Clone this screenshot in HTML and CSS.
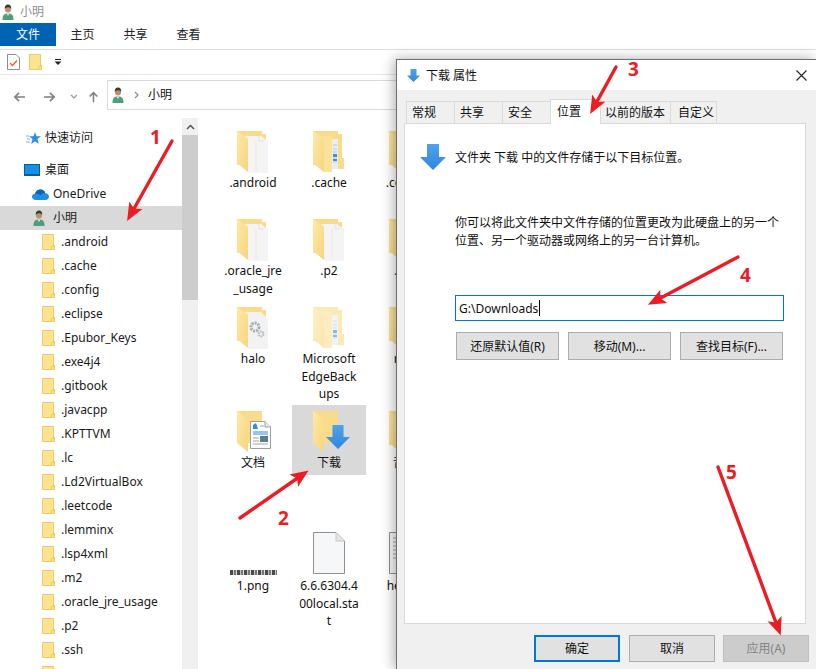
FILE: index.html
```html
<!DOCTYPE html>
<html lang="zh">
<head>
<meta charset="utf-8">
<title>小明</title>
<link rel="stylesheet" href="styles.css">
</head>
<body>
<svg class="defs" aria-hidden="true">
  <defs>
    <linearGradient id="leaf" x1="0" y1="0" x2="1" y2="1"><stop offset="0" stop-color="#fde9a8"/><stop offset="1" stop-color="#f7d57c"/></linearGradient>
    <linearGradient id="blue" x1="0" y1="0" x2="0" y2="1"><stop offset="0" stop-color="#4ea3ea"/><stop offset="1" stop-color="#2f86dc"/></linearGradient>
    <symbol id="user" viewBox="0 0 12 16">
      <path d="M0.5 16C0.5 11 2 9.5 6 9.5S11.5 11 11.5 16Z" fill="#4f9e7b"/>
      <path d="M4.5 9.5L6 12L7.5 9.5Z" fill="#e6e6e0"/>
      <circle cx="6" cy="5.4" r="3" fill="#b88f70"/>
      <path d="M2.8 5C2.4 1.8 4.4 0.5 6.2 0.5S9.6 2 9.2 5C8.4 3.6 7 3.2 5 3.4 4 3.6 3.2 4 2.8 5Z" fill="#3b3a32"/>
    </symbol>
    <symbol id="mini" viewBox="0 0 13 16">
      <path d="M0.5 0.5H11.5V11H12.5V15.5H0.5Z" fill="#fde290" stroke="#eccb68"/>
      <path d="M9.5 12.5V15.5M9.5 12.5H11.5V11" fill="none" stroke="#eccb68"/>
    </symbol>
    <symbol id="fld-paper" viewBox="0 0 32 43">
      <path d="M0 0H25V3H29V34H0Z" fill="#f9dc8a"/>
      <path d="M8 5H24L29 9H31V42H11Z" fill="#f4f4f4"/>
      <path d="M22 5V10H27" fill="none" stroke="#d9d9d9" stroke-width=".6"/>
      <path d="M19 10V40" stroke="#ebe3cf" stroke-width=".8"/>
      <path d="M0 0L11 8V41L0 32Z" fill="url(#leaf)"/>
    </symbol>
    <symbol id="fld-strip" viewBox="0 0 32 43">
      <path d="M0 0H25V3H29V27H31V38H14V34H0Z" fill="#f9dc8a"/>
      <path d="M19 8H25V38H19Z" fill="#e9eef2"/>
      <path d="M20 14H24M20 18H24M20 21H24M20 27H24M20 31H24" stroke="#b9c8d4"/>
      <path d="M20 23H24V26H20ZM20 28H24V30H20Z" fill="#3d8fd1"/>
      <path d="M0 0L10 5H19V41L11 41L0 32Z" fill="#fbe29a"/>
      <path d="M0 0L11 8V41L0 32Z" fill="url(#leaf)"/>
    </symbol>
    <symbol id="fld-gear" viewBox="0 0 32 43">
      <path d="M0 0H25V3H29V34H0Z" fill="#f9dc8a"/>
      <path d="M8 5H24L31 12V42H11Z" fill="#f2f2f2"/>
      <circle cx="18" cy="20" r="4" fill="none" stroke="#a7adb3" stroke-width="3" stroke-dasharray="2 1"/>
      <circle cx="24" cy="27" r="2.4" fill="none" stroke="#b5bbc0" stroke-width="2.2" stroke-dasharray="1.5 .8"/>
      <path d="M0 0L11 8V41L0 32Z" fill="url(#leaf)"/>
    </symbol>
    <symbol id="fld-plain" viewBox="0 0 32 43">
      <path d="M0 0H25V32H0Z" fill="#f9dc8a"/>
      <path d="M0 0L11 8V41L0 32Z" fill="url(#leaf)"/>
    </symbol>
    <symbol id="arrow-down" viewBox="0 0 26 26">
      <path d="M7 0H19V13H26L13 26L0 13H7Z" fill="url(#blue)"/>
    </symbol>
    <marker id="head" markerUnits="userSpaceOnUse" markerWidth="20" markerHeight="18" refX="10" refY="9" orient="auto">
      <path d="M0 1.5L18 9L0 16.500L4 9Z" fill="#ec1c24"/>
    </marker>
  </defs>
</svg>

<div class="explorer">
  <div class="titlebar">
    <svg class="ico-user"><use href="#user"/></svg>
    <span>小明</span>
  </div>
  <div class="ribbon">
    <div class="rib-tab rib-file">文件</div>
    <div class="rib-tab">主页</div>
    <div class="rib-tab">共享</div>
    <div class="rib-tab">查看</div>
  </div>
  <div class="quick">
    <svg class="q-doc" viewBox="0 0 13 16"><path d="M.5.5H9L12.500 4V15.500H.5Z" fill="#fff" stroke="#8d8d8d"/><path d="M3 9L5.500 11.500L10 6.500" fill="none" stroke="#e8622a" stroke-width="1.300"/></svg>
    <svg class="q-fld"><use href="#mini"/></svg>
    <svg class="q-drop" viewBox="0 0 8 6"><path d="M1 .5H7" stroke="#222"/><path d="M.5 2.500H7.500L4 6Z" fill="#222"/></svg>
  </div>
  <div class="navbar">
    <svg class="nav-ico nav-back" viewBox="0 0 14 12"><path d="M13 6H2M6.500 1.500L2 6L6.500 10.500" fill="none" stroke="#808080" stroke-width="1.800"/></svg>
    <svg class="nav-ico nav-fwd" viewBox="0 0 14 12"><path d="M1 6H12M7.500 1.500L12 6L7.500 10.500" fill="none" stroke="#808080" stroke-width="1.800"/></svg>
    <svg class="nav-chev" viewBox="0 0 8 5"><path d="M1 1L4 4L7 1" fill="none" stroke="#9a9a9a" stroke-width="1.200"/></svg>
    <svg class="nav-ico nav-up" viewBox="0 0 12 14"><path d="M6 13V2M1.500 6.500L6 2L10.500 6.500" fill="none" stroke="#808080" stroke-width="1.800"/></svg>
    <div class="address">
      <svg class="ico-user"><use href="#user"/></svg>
      <svg class="addr-chev" viewBox="0 0 5 8"><path d="M1 1L4 4L1 7" fill="none" stroke="#8a8a8a" stroke-width="1.200"/></svg>
      <span>小明</span>
    </div>
  </div>

  <div class="main">
    <nav class="sidebar">
      <div class="row row-quick">
        <svg class="ico-star" viewBox="0 0 15 13"><path d="M9 0L10.500 4.200H15L11.400 7L12.800 12L9 9.200L5.200 12L6.500 7L3 4.200H7.500Z" fill="#2a8de6"/><path d="M0 4H3M1 7H4M0 10H4" stroke="#6db5ef"/></svg>
        <span>快速访问</span>
      </div>
      <div class="row row-desk">
        <svg class="ico-desk" viewBox="0 0 16 12"><rect x=".5" y=".5" width="15" height="11" fill="#1193ea" stroke="#17558a"/><path d="M1 10.500H15" stroke="#0b5da0"/></svg>
        <span>桌面</span>
      </div>
      <div class="row row-drive">
        <svg class="ico-cloud" viewBox="0 0 17 11"><path d="M4 11C1.500 11 0 9.600 0 7.800S1.500 4.800 3 4.800C3.800 2 6 .5 8.500.5S12.500 2 13.200 4C15.500 4.200 17 5.800 17 7.800S15.500 11 13.500 11Z" fill="#1f8fe0"/><path d="M3 4.800C3.800 2 6 .5 8.500.5S12.500 2 13.200 4C11 3.800 9.500 4.800 8.800 6.200C6.800 5 4.800 5 3 4.800Z" fill="#0e63b3"/></svg>
        <span>OneDrive</span>
      </div>
      <div class="row row-user row-on">
        <svg class="ico-user"><use href="#user"/></svg>
        <span>小明</span>
      </div>
      <div class="row row-sub"><svg class="ico-mini"><use href="#mini"/></svg><span>.android</span></div>
      <div class="row row-sub"><svg class="ico-mini"><use href="#mini"/></svg><span>.cache</span></div>
      <div class="row row-sub"><svg class="ico-mini"><use href="#mini"/></svg><span>.config</span></div>
      <div class="row row-sub"><svg class="ico-mini"><use href="#mini"/></svg><span>.eclipse</span></div>
      <div class="row row-sub"><svg class="ico-mini"><use href="#mini"/></svg><span>.Epubor_Keys</span></div>
      <div class="row row-sub"><svg class="ico-mini"><use href="#mini"/></svg><span>.exe4j4</span></div>
      <div class="row row-sub"><svg class="ico-mini"><use href="#mini"/></svg><span>.gitbook</span></div>
      <div class="row row-sub"><svg class="ico-mini"><use href="#mini"/></svg><span>.javacpp</span></div>
      <div class="row row-sub"><svg class="ico-mini"><use href="#mini"/></svg><span>.KPTTVM</span></div>
      <div class="row row-sub"><svg class="ico-mini"><use href="#mini"/></svg><span>.lc</span></div>
      <div class="row row-sub"><svg class="ico-mini"><use href="#mini"/></svg><span>.Ld2VirtualBox</span></div>
      <div class="row row-sub"><svg class="ico-mini"><use href="#mini"/></svg><span>.leetcode</span></div>
      <div class="row row-sub"><svg class="ico-mini"><use href="#mini"/></svg><span>.lemminx</span></div>
      <div class="row row-sub"><svg class="ico-mini"><use href="#mini"/></svg><span>.lsp4xml</span></div>
      <div class="row row-sub"><svg class="ico-mini"><use href="#mini"/></svg><span>.m2</span></div>
      <div class="row row-sub"><svg class="ico-mini"><use href="#mini"/></svg><span>.oracle_jre_usage</span></div>
      <div class="row row-sub"><svg class="ico-mini"><use href="#mini"/></svg><span>.p2</span></div>
      <div class="row row-sub"><svg class="ico-mini"><use href="#mini"/></svg><span>.ssh</span></div>
      <div class="row row-sub"><svg class="ico-mini"><use href="#mini"/></svg></div>
    </nav>
    <div class="scrollbar">
      <div class="sb-btn"><svg class="sb-chev" viewBox="0 0 9 6"><path d="M1 5L4.500 1.500L8 5" fill="none" stroke="#555" stroke-width="1.500"/></svg></div>
      <div class="sb-thumb"></div>
    </div>
    <div class="files">
      <div class="tile"><svg class="big"><use href="#fld-paper"/></svg><div class="label">.android</div></div>
      <div class="tile"><svg class="big"><use href="#fld-strip"/></svg><div class="label">.cache</div></div>
      <div class="tile"><svg class="big"><use href="#fld-paper"/></svg><div class="label">.config</div></div>

      <div class="tile"><svg class="big"><use href="#fld-paper"/></svg><div class="label">.oracle_jre<br>_usage</div></div>
      <div class="tile"><svg class="big"><use href="#fld-paper"/></svg><div class="label">.p2</div></div>
      <div class="tile"><svg class="big"><use href="#fld-paper"/></svg><div class="label">.ssh</div></div>

      <div class="tile"><svg class="big"><use href="#fld-gear"/></svg><div class="label">halo</div></div>
      <div class="tile"><svg class="big faded"><use href="#fld-strip"/></svg><div class="label">Microsoft<br>EdgeBack<br>ups</div></div>
      <div class="tile"><svg class="big"><use href="#fld-paper"/></svg><div class="label">rust</div></div>

      <div class="tile">
        <div class="big-wrap">
          <svg class="big"><use href="#fld-plain"/></svg>
          <svg class="overlay-doc" viewBox="0 0 21 28"><path d="M.5.500H15L20.500 6V27.500H.5Z" fill="#fff" stroke="#9aa0a6"/><path d="M15 .5V6H20.500" fill="#e9ecef" stroke="#9aa0a6"/><path d="M3 11H18M3 13H18" stroke="#2a8de6"/><path d="M3 4L6 2L8 8H3Z" fill="#2a8de6"/><path d="M10 5H14M3 17H9M3 20H9M3 23H18" stroke="#9aa0a6"/><rect x="10" y="15" width="8" height="6" fill="#5d7f8c"/></svg>
        </div>
        <div class="label">文档</div>
      </div>
      <div class="tile tile-on">
        <div class="big-wrap">
          <svg class="big"><use href="#fld-plain"/></svg>
          <svg class="overlay-arrow"><use href="#arrow-down"/></svg>
        </div>
        <div class="label">下载</div>
      </div>
      <div class="tile"><svg class="big"><use href="#fld-paper"/></svg><div class="label">音乐</div></div>

      <div class="tile tile-low">
        <div class="thumb-box"><div class="thumb"></div></div>
        <div class="label">1.png</div>
      </div>
      <div class="tile tile-low">
        <div class="thumb-box"><svg class="file-ico" viewBox="0 0 32 42"><path d="M.5.500H23L31.500 9V41.500H.5Z" fill="#f6f7f8" stroke="#8f8f8f"/><path d="M23 .5V9H31.500" fill="#e4e6e8" stroke="#c4c4c4"/></svg></div>
        <div class="label">6.6.6304.4<br>00local.sta<br>t</div>
      </div>
      <div class="tile tile-low">
        <div class="thumb-box"><svg class="file-ico" viewBox="0 0 32 42"><path d="M.5.500H23L31.500 9V41.500H.5Z" fill="#f6f7f8" stroke="#8f8f8f"/><path d="M4 6H20M4 10H20M4 14H28M4 18H28M4 22H28M4 26H28" stroke="#9a9a9a"/></svg></div>
        <div class="label">hello.c</div>
      </div>
    </div>
  </div>
</div>

<section class="dialog">
  <header class="dlg-title">
    <svg class="dlg-ico"><use href="#arrow-down"/></svg>
    <span>下载 属性</span>
    <svg class="dlg-close" viewBox="0 0 11 11"><path d="M.5.500L10.500 10.500M10.500.5L.5 10.500" stroke="#222" stroke-width="1.100"/></svg>
  </header>
  <div class="dlg-body">
    <div class="tabs">
      <div class="tab tab-a">常规</div>
      <div class="tab tab-a">共享</div>
      <div class="tab tab-a">安全</div>
      <div class="tab tab-a tab-on">位置</div>
      <div class="tab tab-b">以前的版本</div>
      <div class="tab tab-c">自定义</div>
    </div>
    <div class="panel">
      <div class="loc-head">
        <svg class="loc-ico"><use href="#arrow-down"/></svg>
        <span>文件夹 下载 中的文件存储于以下目标位置。</span>
      </div>
      <p class="loc-text">你可以将此文件夹中文件存储的位置更改为此硬盘上的另一个<br>位置、另一个驱动器或网络上的另一台计算机。</p>
      <div class="loc-input"><span>G:\Downloads</span><i class="caret"></i></div>
      <div class="loc-btns">
        <div class="btn btn-wide">还原默认值(R)</div>
        <div class="btn btn-wide">移动(M)...</div>
        <div class="btn btn-wide">查找目标(F)...</div>
      </div>
    </div>
    <div class="dlg-foot">
      <div class="btn btn-foot btn-default">确定</div>
      <div class="btn btn-foot">取消</div>
      <div class="btn btn-foot btn-off">应用(A)</div>
    </div>
  </div>
</section>

<div class="notes">
  <svg class="note-lines" viewBox="0 0 816 669">
    <line x1="172" y1="141" x2="131" y2="214" marker-end="url(#head)"/>
    <line x1="240" y1="518" x2="302" y2="475" marker-end="url(#head)"/>
    <line x1="616" y1="67" x2="594" y2="107" marker-end="url(#head)"/>
    <line x1="738" y1="257" x2="655" y2="301" marker-end="url(#head)"/>
    <line x1="718" y1="467" x2="778" y2="628" marker-end="url(#head)"/>
  </svg>
  <span class="num num-1">1</span>
  <span class="num num-2">2</span>
  <span class="num num-3">3</span>
  <span class="num num-4">4</span>
  <span class="num num-5">5</span>
</div>
</body>
</html>
```
FILE: styles.css
```css
html, body {
  margin: 0;
  height: 669px;
  overflow: hidden;
  background: #fff;
}
body {
  position: relative;
  font: 12px/17px "Noto Sans", "Noto Sans CJK SC", sans-serif;
  color: #111;
}
.defs { position: absolute; width: 0; height: 0; }

.explorer { width: 816px; height: 669px; overflow: hidden; display: flex; flex-direction: column; }

.titlebar { height: 23px; display: flex; align-items: center; gap: 6px; padding-left: 2px; color: #8e8e8e; }
.ico-user { width: 12px; height: 16px; flex: none; }

.ribbon { height: 26px; display: flex; box-sizing: content-box; align-items: flex-start; border-bottom: 1px solid #dcdcdc; }
.rib-tab { width: 53px; height: 23px; line-height: 24px; text-align: center; color: #222; }
.rib-file { width: 56px; background: #0063b1; color: #fff; }

.quick { height: 24px; display: flex; align-items: center; padding-left: 7px; border-bottom: 1px solid #e6e6e6; }
.q-doc { width: 13px; height: 16px; }
.q-fld { width: 13px; height: 16px; margin-left: 9px; }
.q-drop { width: 8px; height: 6px; margin-left: 12px; }

.navbar { height: 43px; display: flex; align-items: center; flex: none; padding-left: 13px; padding-bottom: 1px; box-sizing: border-box; }
.nav-ico { width: 13px; height: 12px; margin-top: 1px; }
.nav-fwd { margin-left: 17px; }
.nav-chev { width: 8px; height: 5px; margin-left: 14px; margin-top: 1px; }
.nav-up { margin-left: 9px; }
.address { margin-left: 7px; width: 340px; height: 30px; border: 1px solid #d9d9d9; display: flex; align-items: center; padding-left: 4px; box-sizing: border-box; flex: none; margin-top: -3px; }
.addr-chev { width: 5px; height: 8px; margin-left: 10px; margin-right: 9px; }

.main { flex: 1; display: flex; min-height: 0; }
.sidebar { width: 182px; padding-top: 8px; flex: none; color: #1a1a1a; }
.row { height: 24px; display: flex; align-items: center; box-sizing: border-box; }
.row span { white-space: nowrap; margin-bottom: 2px; }
.row-quick { padding-left: 26px; gap: 4px; margin-bottom: 8px; }
.row-desk { padding-left: 24px; gap: 5px; }
.row-drive { padding-left: 32px; gap: 4px; }
.row-user { padding-left: 33px; gap: 8px; }
.row-on { background: #d9d9d9; }
.row-sub { padding-left: 42px; gap: 6px; }
.ico-star { width: 15px; height: 13px; }
.ico-desk { width: 16px; height: 12px; }
.ico-cloud { width: 17px; height: 11px; }
.ico-mini { width: 13px; height: 16px; flex: none; }

.scrollbar { width: 16px; flex: none; background: #f0f0f0; }
.sb-btn { height: 17px; display: flex; align-items: center; justify-content: center; }
.sb-chev { width: 9px; height: 6px; }
.sb-thumb { height: 165px; background: #cdcdcd; }

.files {
  flex: 1;
  display: grid;
  grid-template-columns: repeat(3, 74px);
  grid-template-rows: 88px 88px 104px 120px auto;
  column-gap: 2px;
  padding: 7px 0 0 18px;
  align-content: start;
}
.tile { height: max-content; padding: 6px 0 3px; min-height: 61px; display: flex; flex-direction: column; align-items: center; box-sizing: border-box; }
.tile-on { background: #d9d9d9; height: 70px; }
.big { width: 32px; height: 43px; display: block; flex: none; }
.faded { opacity: .62; }
.big-wrap { width: 32px; height: 43px; position: relative; flex: none; }
.overlay-doc { position: absolute; left: 13px; top: 10px; width: 21px; height: 28px; }
.overlay-arrow { position: absolute; left: 13px; top: 14px; width: 24px; height: 24px; }
.label { text-align: center; line-height: 17.5px; white-space: nowrap; }
.thumb-box { height: 46px; width: 100%; display: flex; justify-content: center; align-items: flex-start; flex: none; }
.thumb { width: 47px; height: 5px; margin-top: 39px; filter: blur(.5px); background: repeating-linear-gradient(90deg, #4a4a4a 0 3px, #c4c4c4 3px 4px, #777 4px 6px, #dcdcdc 6px 7px); }
.file-ico { width: 32px; height: 42px; margin-top: 1px; }

.dialog {
  position: absolute;
  left: 396px;
  top: 59px;
  width: 420px;
  height: 610px;
  box-sizing: border-box;
  border: 1px solid #6e6e6e;
  border-right: 0;
  border-bottom: 0;
  background: #f0f0f0;
  box-shadow: -2px 0 12px rgba(0, 0, 0, .32);
  display: flex;
  flex-direction: column;
}
.dlg-title { height: 30px; flex: none; background: #fff; display: flex; align-items: center; padding-left: 10px; gap: 6px; }
.dlg-ico { width: 13px; height: 13px; }
.dlg-close { width: 11px; height: 11px; margin-left: auto; margin-right: 9px; }
.dlg-body { flex: 1; display: flex; flex-direction: column; padding: 9px 0 0 7px; }
.tabs { display: flex; height: 24px; align-items: flex-end; margin-left: 2px; flex: none; position: relative; z-index: 1; }
.tab { height: 22px; line-height: 21px; box-sizing: border-box; border: 1px solid #dadada; border-bottom: 0; margin-right: -1px; background: #f0f0f0; padding-left: 5px; }
.tab-a { width: 49px; }
.tab-b { width: 71px; padding-left: 4px; }
.tab-c { width: 47px; padding-left: 7px; }
.tab-on { background: #fff; height: 25px; margin-bottom: -1px; position: relative; z-index: 1; line-height: 23px; width: 51px; padding-left: 6px; }

.panel { width: 402px; height: 501px; flex: none; box-sizing: border-box; background: #fff; border: 1px solid #d9d9d9; padding: 19px 0 0 15px; }
.loc-head { display: flex; align-items: center; height: 27px; gap: 9px; }
.loc-head span { margin-top: 1px; }
.loc-ico { width: 26px; height: 26px; flex: none; }
.loc-text { margin: 44px 0 0 35px; line-height: 18px; white-space: nowrap; }
.loc-input { margin: 45px 0 0 35px; width: 329px; height: 26px; box-sizing: border-box; border: 1px solid #0078d7; display: flex; align-items: center; padding-left: 3px; }
.caret { width: 1px; height: 16px; background: #000; margin-left: 1px; }
.loc-btns { display: flex; gap: 9px; margin: 11px 0 0 36px; }

.btn { box-sizing: border-box; display: flex; align-items: center; justify-content: center; background: #e1e1e1; border: 1px solid #adadad; }
.btn-wide { width: 103px; height: 28px; }
.dlg-foot { display: flex; gap: 8px; margin: 11px 0 0 130px; }
.btn-foot { width: 86px; height: 27px; }
.btn-default { border: 2px solid #0078d7; margin-right: 1px; }
.btn-off { background: #ccc; border-color: #bfbfbf; color: #838383; }

.notes { position: absolute; inset: 0; z-index: 2; pointer-events: none; }
.note-lines { position: absolute; inset: 0; width: 816px; height: 669px; }
.note-lines line { stroke: #ec1c24; stroke-width: 3.4; stroke-linecap: round; }
.num { position: absolute; font: 700 19px/20px "Open Sans", sans-serif; color: #ec1c24; }
.num-1 { left: 150px; top: 127px; }
.num-2 { left: 278px; top: 508px; }
.num-3 { left: 628px; top: 59px; }
.num-4 { left: 740px; top: 265px; }
.num-5 { left: 726px; top: 462px; }
```
